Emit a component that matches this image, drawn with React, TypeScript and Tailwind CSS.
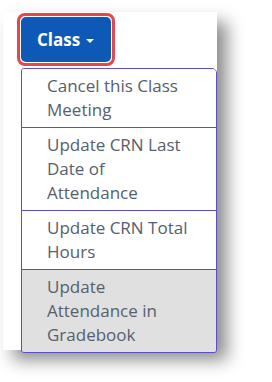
import React from 'react';

const items = [
  { label: 'Cancel this Class Meeting', active: false },
  { label: 'Update CRN Last Date of Attendance', active: false },
  { label: 'Update CRN Total Hours', active: false },
  { label: 'Update Attendance in Gradebook', active: true },
];

export default function App() {
  return (
    <div className="w-[272px] h-[382px] bg-white pl-[3px] pt-[12px]" style={{ fontFamily: '"Open Sans", "Noto Sans", sans-serif' }}>
      <div className="w-[214px] h-[338px] bg-white shadow-[10px_10px_16px_rgba(0,0,0,0.45)] pl-[14px] pt-[1px]">
        <div className="w-[98px] h-[53px] rounded-[8px] border-[3px] border-[#e2474d] p-[1px]">
          <button className="w-full h-full rounded-[5px] bg-[#0f59b6] text-white font-bold text-[17px] flex items-center pl-[16px] gap-[6px]">
            Class
            <span className="w-0 h-0 border-l-[4px] border-r-[4px] border-t-[4px] border-l-transparent border-r-transparent border-t-white mt-[3px]" />
          </button>
        </div>
        <div className="ml-[4px] mt-[2px] w-[196px] border-[1.5px] border-[#5a4fc4] rounded-[3px] rounded-tr-[5px] overflow-hidden">
          {items.map((item, i) => (
            <div
              key={i}
              className={`pl-[25px] pr-[21px] py-[5px] text-[17px] leading-[24px] text-[#56606c] ${i > 0 ? 'border-t-[1.5px] border-[#5a4fc4]' : ''} ${item.active ? 'bg-[#e0e0e0]' : 'bg-white'}`}
            >
              {item.label}
            </div>
          ))}
        </div>
      </div>
    </div>
  );
}
